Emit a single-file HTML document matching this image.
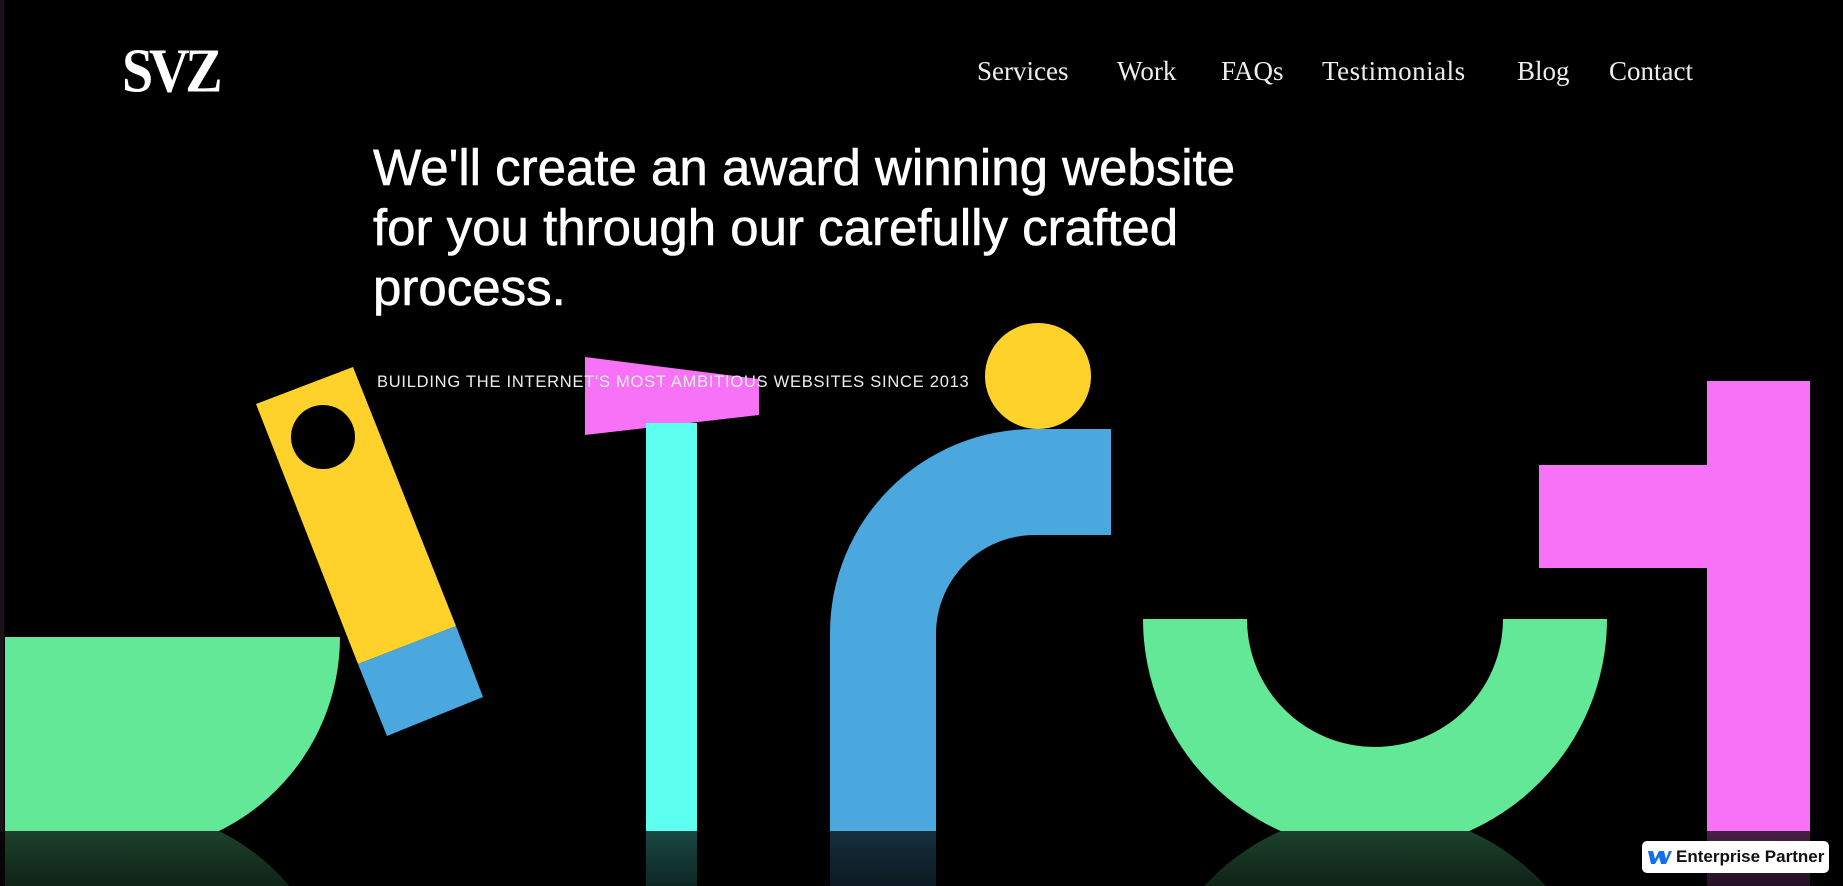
<!DOCTYPE html>
<html><head><meta charset="utf-8"><style>
html,body{margin:0;padding:0;background:#000;width:1843px;height:886px;overflow:hidden;}
body{position:relative;font-family:"Liberation Sans",sans-serif;color:#fff;}
.edge{position:absolute;left:0;top:0;width:4px;height:886px;background:#1c1219;}
.logo{position:absolute;left:122px;top:40px;font-family:"Liberation Serif",serif;font-size:66px;font-weight:bold;letter-spacing:-5px;transform:scale(0.85,0.95);transform-origin:top left;line-height:1;}
.nav{position:absolute;top:58px;font-family:"Liberation Serif",serif;font-size:27px;color:#eee;line-height:1;}
h1{position:absolute;left:373px;top:138px;margin:0;font-weight:normal;font-size:51px;line-height:60px;width:1000px;letter-spacing:0px;-webkit-text-stroke:0.6px #fff;}
.sub{position:absolute;left:377px;top:373px;font-size:16.5px;letter-spacing:0.75px;color:#eee;z-index:5;}
svg{position:absolute;left:0;top:0;}
.badge{position:absolute;left:1642px;top:841px;width:187px;height:32px;background:#fff;border-radius:5px;color:#111;font-size:17px;font-weight:bold;line-height:32px;}
</style></head><body>
<div class="edge"></div>
<svg width="1843" height="886" viewBox="0 0 1843 886">
<defs>
<g id="shapes">
<path d="M5,637 H340 A216,216 0 0 1 124,853 H5 Z" fill="#62e896"/>
<polygon points="256,404 353,367 456,626 358,664" fill="#ffd12b"/>
<polygon points="358,664 456,626 483,697 387,736" fill="#4ba8de"/>
<polygon points="585,357 759,379 759,415 585,435" fill="#f772f7"/>
<rect x="646" y="423" width="51" height="463" fill="#5cfff0"/>
<circle cx="1038" cy="376" r="53" fill="#ffd12b"/>
<path d="M830,886 V633 A204,204 0 0 1 1034,429 H1111 V535 H1035 A99,99 0 0 0 936,634 V886 Z" fill="#4ba8de"/>
<path d="M1143,619 A232,232 0 0 0 1607,619 H1503 A128,128 0 0 1 1247,619 Z" fill="#62e896"/>
<rect x="1707" y="381" width="103" height="505" fill="#f772f7"/>
<rect x="1539" y="465" width="168" height="103" fill="#f772f7"/>
</g>
<clipPath id="top"><rect x="0" y="0" width="1843" height="831"/></clipPath>
<clipPath id="bot"><rect x="0" y="831" width="1843" height="55"/></clipPath>
<linearGradient id="fade" x1="0" y1="831" x2="0" y2="886" gradientUnits="userSpaceOnUse"><stop offset="0" stop-color="#000" stop-opacity="0.72"/><stop offset="1" stop-color="#000" stop-opacity="0.85"/></linearGradient>
</defs>
<use href="#shapes" clip-path="url(#top)"/>
<g clip-path="url(#bot)"><use href="#shapes" transform="translate(0,1662) scale(1,-1)"/><rect x="0" y="831" width="1843" height="55" fill="url(#fade)"/></g>
<circle cx="323" cy="437" r="32" fill="#000"/>
</svg>
<div class="logo">SVZ</div>
<div class="nav" style="left:977px">Services</div>
<div class="nav" style="left:1117px">Work</div>
<div class="nav" style="left:1221px">FAQs</div>
<div class="nav" style="left:1322px;letter-spacing:0.5px">Testimonials</div>
<div class="nav" style="left:1517px">Blog</div>
<div class="nav" style="left:1609px">Contact</div>
<h1>We'll create an award winning website<br>for you through our carefully crafted<br>process.</h1>
<div class="sub">BUILDING THE INTERNET'S MOST AMBITIOUS WEBSITES SINCE 2013</div>
<div class="badge"><svg width="24" height="16" viewBox="0 0 24 16" style="position:absolute;left:6px;top:8px"><path d="M0,2 H5 L7,10 L11,2 H16 L18,10 L21,2 H24 L18,15 H13 L11,8 L7,15 H3 Z" fill="#146ef5"/></svg><span style="position:absolute;left:34px">Enterprise Partner</span></div>
</body></html>
